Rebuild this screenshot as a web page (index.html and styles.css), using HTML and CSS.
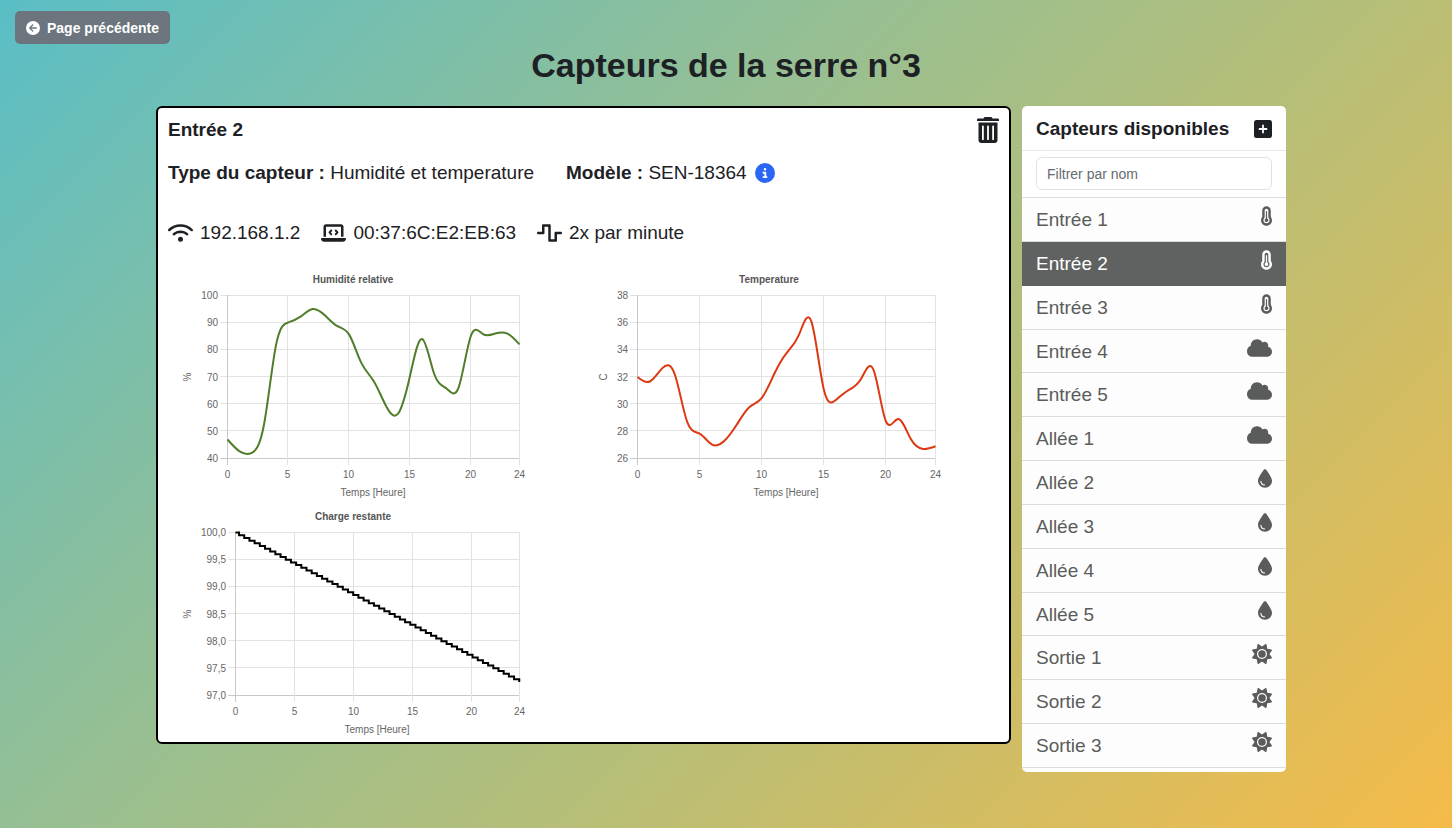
FILE: index.html
```html
<!DOCTYPE html>
<html lang="fr">
<head>
<meta charset="utf-8">
<title>Capteurs de la serre n°3</title>
<link rel="stylesheet" href="styles.css">
</head>
<body>
<svg class="sprite" aria-hidden="true">
  <symbol id="i-back" viewBox="0 0 512 512"><path fill-rule="evenodd" d="M512 256A256 256 0 1 0 0 256a256 256 0 1 0 512 0zM231 127c9.400-9.400 24.600-9.400 33.900 0s9.400 24.600 0 33.900l-71 71L376 232c13.300 0 24 10.700 24 24s-10.700 24-24 24l-182.100 0 71 71c9.400 9.400 9.400 24.600 0 33.900s-24.600 9.400-33.900 0L119 273c-9.400-9.400-9.400-24.600 0-33.900L231 127z"/></symbol>
  <symbol id="i-info" viewBox="0 0 512 512"><path fill-rule="evenodd" d="M256 512A256 256 0 1 0 256 0a256 256 0 1 0 0 512zM216 336h24V272H216c-13.300 0-24-10.700-24-24s10.700-24 24-24h48c13.300 0 24 10.700 24 24v88h8c13.300 0 24 10.700 24 24s-10.700 24-24 24H216c-13.300 0-24-10.700-24-24s10.700-24 24-24zm40-208a32 32 0 1 1 0 64 32 32 0 1 1 0-64z"/></symbol>
  <symbol id="i-wifi" viewBox="0 0 640 512"><path d="M54.200 202.900C123.200 136.700 216.800 96 320 96s196.800 40.700 265.800 106.900c12.800 12.200 33 11.800 45.200-.9s11.800-33-.9-45.200C549.700 79.500 440.400 32 320 32S90.300 79.500 9.800 156.700C-2.900 169-3.300 189.200 8.900 202s32.500 13.200 45.200 .9zM320 256c56.800 0 108.600 21.100 148.200 56c13.300 11.700 33.500 10.400 45.200-2.800s10.400-33.500-2.800-45.200C459.800 219.200 393 192 320 192s-139.800 27.200-190.500 72c-13.300 11.700-14.500 31.900-2.800 45.200s31.900 14.500 45.200 2.800c39.500-34.900 91.300-56 148.200-56zm64 160a64 64 0 1 0 -128 0 64 64 0 1 0 128 0z"/></symbol>
  <symbol id="i-laptop" viewBox="0 0 640 512"><path d="M64 96c0-35.300 28.700-64 64-64H512c35.300 0 64 28.700 64 64V352H512V96H128V352H64V96zM0 403.200C0 392.600 8.600 384 19.200 384H620.800c10.600 0 19.200 8.600 19.200 19.200c0 42.400-34.400 76.800-76.800 76.800H76.800C34.400 480 0 445.600 0 403.200zM281 209l-31 31 31 31c9.400 9.400 9.400 24.600 0 33.900s-24.600 9.400-33.900 0l-48-48c-9.400-9.400-9.400-24.600 0-33.900l48-48c9.400-9.400 24.600-9.400 33.900 0s9.400 24.600 0 33.900zM393 175l48 48c9.400 9.400 9.400 24.600 0 33.900l-48 48c-9.400 9.400-24.600 9.400-33.900 0s-9.400-24.600 0-33.900l31-31-31-31c-9.400-9.400-9.400-24.600 0-33.900s24.600-9.400 33.900 0z"/></symbol>
  <symbol id="i-wave" viewBox="0 0 640 512"><path d="M128 64c0-17.700 14.300-32 32-32H320c17.700 0 32 14.300 32 32V416h96V256c0-17.700 14.300-32 32-32H608c17.700 0 32 14.300 32 32s-14.300 32-32 32H512V448c0 17.700-14.300 32-32 32H320c-17.700 0-32-14.300-32-32V96H192V256c0 17.700-14.300 32-32 32H32c-17.700 0-32-14.300-32-32s14.300-32 32-32h96V64z"/></symbol>
  <symbol id="i-trash" viewBox="0 0 22 26"><path fill-rule="evenodd" d="M7.500 0h7l1 1.500H21a1 1 0 0 1 1 1V4H0V2.500a1 1 0 0 1 1-1h5.500zM1.500 5.500h19V23a3 3 0 0 1-3 3h-13a3 3 0 0 1-3-3zM5 9.300v12.900a.9.900 0 0 0 1.800 0V9.300a.9.900 0 0 0-1.800 0zM10.100 9.300v12.900a.9.900 0 0 0 1.800 0V9.300a.9.900 0 0 0-1.800 0zM15.200 9.300v12.900a.9.900 0 0 0 1.800 0V9.300a.9.900 0 0 0-1.800 0z"/></symbol>
  <symbol id="i-plus" viewBox="0 0 18 18"><rect width="18" height="18" rx="2.500"/><path d="M9 5.500v7M5.500 9h7" stroke="#fff" stroke-width="1.800" stroke-linecap="round"/></symbol>
  <symbol id="i-temp" viewBox="16 0 288 512"><path fill-rule="evenodd" d="M160 64c-26.500 0-48 21.500-48 48V276.500c0 17.300-7.100 31.900-15.300 42.500C86.200 332.600 80 349.500 80 368c0 44.200 35.800 80 80 80s80-35.800 80-80c0-18.500-6.200-35.400-16.700-48.900c-8.200-10.600-15.300-25.200-15.300-42.500V112c0-26.500-21.500-48-48-48zM48 112C48 50.200 98.100 0 160 0s112 50.100 112 112V276.500c0 .1 .1 .3 .2 .6c.2 .6 .8 1.600 1.700 2.800c18.900 24.400 30.100 55 30.100 88.100c0 79.500-64.500 144-144 144S16 447.500 16 368c0-33.200 11.200-63.800 30.100-88.100c.9-1.200 1.500-2.200 1.700-2.800c.1-.3 .2-.5 .2-.6V112zM208 368c0 26.500-21.500 48-48 48s-48-21.500-48-48c0-20.900 13.400-38.700 32-45.300V144c0-8.800 7.200-16 16-16s16 7.200 16 16V322.700c18.600 6.600 32 24.400 32 45.300z"/></symbol>
  <symbol id="i-cloud" viewBox="0 0 640 512"><path d="M537.600 226.600c4.100-10.700 6.400-22.400 6.400-34.600 0-53-43-96-96-96-19.700 0-38.100 6-53.300 16.200C367 64.200 315.300 32 256 32c-88.400 0-160 71.600-160 160 0 2.700.1 5.400.2 8.100C40.200 219.800 0 273.200 0 336c0 79.500 64.500 144 144 144h368c70.700 0 128-57.300 128-128 0-61.900-44-113.600-102.400-125.400z"/></symbol>
  <symbol id="i-drop" viewBox="0 0 384 512"><path fill-rule="evenodd" d="M192 512C86 512 0 426 0 320C0 228.800 130.200 57.700 166.600 11.700C172.600 4.200 181.500 0 191.100 0h1.800c9.600 0 18.500 4.200 24.500 11.700C253.800 57.700 384 228.800 384 320c0 106-86 192-192 192zM96 336c0-8.800-7.200-16-16-16s-16 7.200-16 16c0 61.900 50.100 112 112 112c8.800 0 16-7.200 16-16s-7.200-16-16-16c-44.200 0-80-35.800-80-80z"/></symbol>
  <symbol id="i-sun" viewBox="0 0 512 512"><path fill-rule="evenodd" d="M361.500 1.200c5 2.100 8.600 6.600 9.600 11.900L391 121l107.900 19.800c5.300 1 9.800 4.600 11.900 9.600s1.500 10.700-1.600 15.200L446.900 256l62.300 90.300c3.100 4.500 3.700 10.200 1.600 15.200s-6.600 8.600-11.900 9.600L391 391 371.100 498.900c-1 5.300-4.600 9.800-9.600 11.900s-10.700 1.500-15.200-1.600L256 446.900l-90.300 62.300c-4.500 3.100-10.200 3.700-15.200 1.600s-8.600-6.600-9.600-11.900L121 391 13.100 371.100c-5.300-1-9.800-4.600-11.900-9.600s-1.500-10.700 1.600-15.200L65.100 256 2.800 165.700c-3.100-4.500-3.700-10.200-1.600-15.200s6.600-8.600 11.900-9.600L121 121 140.900 13.100c1-5.300 4.600-9.800 9.600-11.900s10.700-1.500 15.200 1.600L256 65.100 346.300 2.800c4.500-3.100 10.200-3.700 15.200-1.600zM160 256a96 96 0 1 1 192 0 96 96 0 1 1 -192 0zm224 0a128 128 0 1 0 -256 0 128 128 0 1 0 256 0z"/></symbol>
</svg>

<header class="page-head">
  <button class="back" type="button"><svg class="back-icon"><use href="#i-back"/></svg>Page précédente</button>
  <h1 class="page-title">Capteurs de la serre n°3</h1>
</header>

<main class="layout">
  <section class="card">
    <div class="card-head">
      <h2 class="card-title">Entrée 2</h2>
      <button class="icon-button" type="button" aria-label="Supprimer"><svg class="trash-icon"><use href="#i-trash"/></svg></button>
    </div>
    <div class="facts">
      <p class="fact-text"><strong>Type du capteur :</strong> Humidité et temperature</p>
      <p class="fact-text"><strong>Modèle :</strong> SEN-18364</p>
      <button class="icon-button info" type="button" aria-label="Informations"><svg class="info-icon"><use href="#i-info"/></svg></button>
    </div>
    <div class="network">
      <span class="net-item"><svg class="wide-icon"><use href="#i-wifi"/></svg>192.168.1.2</span>
      <span class="net-item"><svg class="wide-icon"><use href="#i-laptop"/></svg>00:37:6C:E2:EB:63</span>
      <span class="net-item"><svg class="wide-icon"><use href="#i-wave"/></svg>2x par minute</span>
    </div>
    <div class="charts">
      <svg class="chart" id="humidity" viewBox="0 0 350 235" role="img" aria-label="Humidité relative"></svg>
      <svg class="chart" id="temperature" viewBox="0 0 350 235" role="img" aria-label="Temperature"></svg>
      <svg class="chart" id="battery" viewBox="0 0 350 235" role="img" aria-label="Charge restante"></svg>
    </div>
  </section>

  <aside class="sidebar">
    <div class="side-head">
      <h2 class="card-title">Capteurs disponibles</h2>
      <button class="icon-button" type="button" aria-label="Ajouter"><svg class="plus-icon"><use href="#i-plus"/></svg></button>
    </div>
    <div class="filter"><input class="filter-input" type="text" placeholder="Filtrer par nom" aria-label="Filtrer par nom"></div>
    <nav class="sensors">
      <a class="sensor" href="#">Entrée 1<svg class="temp-icon"><use href="#i-temp"/></svg></a>
      <a class="sensor sensor-active" href="#">Entrée 2<svg class="temp-icon"><use href="#i-temp"/></svg></a>
      <a class="sensor" href="#">Entrée 3<svg class="temp-icon"><use href="#i-temp"/></svg></a>
      <a class="sensor" href="#">Entrée 4<svg class="wide-icon"><use href="#i-cloud"/></svg></a>
      <a class="sensor" href="#">Entrée 5<svg class="wide-icon"><use href="#i-cloud"/></svg></a>
      <a class="sensor" href="#">Allée 1<svg class="wide-icon"><use href="#i-cloud"/></svg></a>
      <a class="sensor" href="#">Allée 2<svg class="drop-icon"><use href="#i-drop"/></svg></a>
      <a class="sensor" href="#">Allée 3<svg class="drop-icon"><use href="#i-drop"/></svg></a>
      <a class="sensor" href="#">Allée 4<svg class="drop-icon"><use href="#i-drop"/></svg></a>
      <a class="sensor" href="#">Allée 5<svg class="drop-icon"><use href="#i-drop"/></svg></a>
      <a class="sensor" href="#">Sortie 1<svg class="sun-icon"><use href="#i-sun"/></svg></a>
      <a class="sensor" href="#">Sortie 2<svg class="sun-icon"><use href="#i-sun"/></svg></a>
      <a class="sensor" href="#">Sortie 3<svg class="sun-icon"><use href="#i-sun"/></svg></a>
    </nav>
  </aside>
</main>
<script src="charts.js"></script>
</body>
</html>
```
FILE: styles.css
```css
* { box-sizing: border-box; }

body {
  margin: 0;
  min-height: 100vh;
  font-family: "Liberation Sans", Arial, sans-serif;
  font-size: 19px;
  line-height: 28px;
  color: #1d2125;
  background: linear-gradient(135deg, #5abec6 0%, #9abf90 40%, #b8be76 62%, #f5bb49 100%);
}

h1, h2, p { margin: 0; }
svg { display: block; flex: none; fill: currentColor; }
.sprite { display: none; }

.page-head { padding: 11px 15px 0; }

.back {
  display: flex;
  align-items: center;
  gap: 7px;
  height: 33px;
  padding: 0 11px;
  border: 0;
  border-radius: 5px;
  background: #6c757d;
  color: #fff;
  font: bold 14px "Liberation Sans", Arial, sans-serif;
}
.back-icon { width: 14px; height: 14px; }

.page-title {
  font-size: 34px;
  line-height: 42px;
  text-align: center;
}

.layout {
  display: grid;
  grid-template-columns: 855fr 264fr;
  align-items: start;
  gap: 11px;
  max-width: 1140px;
  margin: 0 auto;
  padding: 20px 10px 16px 0;
}

.card {
  padding: 8px 10px 0;
  border: 2px solid #000;
  border-radius: 6px;
  background: #fff;
}
.card-head { display: flex; justify-content: space-between; align-items: center; }
.card-title { font-size: 19px; line-height: 28px; }

.icon-button { padding: 0; border: 0; background: none; color: #1d2125; }
.trash-icon { width: 22px; height: 26px; }
.info { color: #2b67f6; }
.info-icon { width: 20px; height: 20px; }
.plus-icon { width: 18px; height: 18px; }

.facts { display: flex; align-items: center; padding-top: 15px; }
.fact-text + .fact-text { margin: 0 8px 0 32px; }

.network { display: flex; gap: 21px; padding-top: 32px; }
.net-item { display: flex; align-items: center; gap: 7px; }
.wide-icon { width: 25px; height: 20px; }

.charts {
  display: grid;
  grid-template-columns: 1fr 1fr;
  gap: 2px 10px;
  padding: 23px 0 0 10px;
}
.chart { width: 100%; max-width: 350px; height: auto; font-size: 10px; fill: #666; }
.chart-title { font-weight: bold; fill: #555; text-anchor: middle; }
.label-x { text-anchor: middle; }
.label-y { text-anchor: end; }
.grid-line { stroke: #e2e2e2; }
.axis-line { stroke: #c8c8c8; }
.curve { fill: none; stroke-width: 2; }
.curve-humidity { stroke: #4f7d2a; }
.curve-temperature { stroke: #dc3912; }
.curve-battery { stroke: #000; }

.sidebar {
  padding-bottom: 4px;
  border-radius: 5px;
  background: #fff;
  overflow: hidden;
}
.side-head {
  display: flex;
  justify-content: space-between;
  align-items: center;
  padding: 9px 14px 7px;
  border-bottom: 1px solid #e6e8ea;
}
.filter { padding: 6px 14px 7px; }
.filter-input {
  display: block;
  width: 100%;
  height: 33px;
  padding: 0 10px;
  border: 1px solid #dee2e6;
  border-radius: 6px;
  font: 14px "Liberation Sans", Arial, sans-serif;
  color: #212529;
}
.filter-input::placeholder { color: #656b71; opacity: 1; }

.sensors {
  display: grid;
  grid-auto-rows: 1fr;
  min-height: 571px;
  border-top: 1px solid #dcdcdc;
}
.sensor {
  display: flex;
  justify-content: space-between;
  align-items: flex-start;
  padding: 8px 14px 6px;
  border-bottom: 1px solid #dcdcdc;
  background: #fdfdfd;
  color: #5a5c5b;
  text-decoration: none;
}
.sensor-active { background: #606261; border-color: #606261; color: #fff; }
.temp-icon { width: 11px; height: 20px; }
.drop-icon { width: 14px; height: 19px; }
.sun-icon { width: 20px; height: 20px; }
```
FILE: charts.js
```js
const TOP = 25, BOTTOM = 188, RIGHT = 341;

function add(svg, name, attrs, text) {
  const el = document.createElementNS("http://www.w3.org/2000/svg", name);
  for (const key in attrs) el.setAttribute(key, attrs[key]);
  if (text !== undefined) el.textContent = text;
  svg.appendChild(el);
}

// Natural cubic spline through evenly spaced points, as Bezier segments.
function spline(points) {
  const n = points.length - 1;
  const c = [0.5], d = [1.5 * (points[1][1] - points[0][1])];
  for (let i = 1; i <= n; i++) {
    const last = i === n;
    const b = last ? 2 : 4;
    const r = 3 * (points[last ? n : i + 1][1] - points[i - 1][1]);
    const m = b - c[i - 1];
    c.push(1 / m);
    d.push((r - d[i - 1]) / m);
  }
  const slope = [];
  slope[n] = d[n];
  for (let i = n - 1; i >= 0; i--) slope[i] = d[i] - c[i] * slope[i + 1];

  let path = "M" + points[0];
  for (let i = 0; i < n; i++) {
    const [x0, y0] = points[i], [x1, y1] = points[i + 1];
    const third = (x1 - x0) / 3;
    path += `C${x0 + third},${y0 + slope[i] / 3} ${x1 - third},${y1 - slope[i + 1] / 3} ${x1},${y1}`;
  }
  return path;
}

function drawChart(o) {
  const svg = document.getElementById(o.id);
  const x = h => o.left + h / 24 * (RIGHT - o.left);
  const y = v => BOTTOM - (v - o.min) / (o.max - o.min) * (BOTTOM - TOP);
  const snap = n => Math.floor(n) + 0.5;

  add(svg, "text", { x: 175, y: 13, class: "chart-title" }, o.title);
  for (let v = o.max; v >= o.min; v -= o.step) {
    const line = snap(y(v));
    add(svg, "path", { d: `M${o.left - 7} ${line}H${RIGHT + 1}`, class: v === o.min ? "axis-line" : "grid-line" });
    add(svg, "text", { x: o.left - 9, y: Math.round(y(v)) + 4, class: "label-y" }, v.toFixed(o.digits).replace(".", ","));
  }
  for (const h of [0, 5, 10, 15, 20, 24]) {
    const line = snap(x(h));
    add(svg, "path", { d: `M${line} ${TOP}V${BOTTOM + 7}`, class: h === 0 ? "axis-line" : "grid-line" });
    add(svg, "text", { x: line, y: 208, class: "label-x" }, h);
  }
  add(svg, "text", { x: (o.left + RIGHT) / 2, y: 226, class: "label-x" }, "Temps [Heure]");
  add(svg, "text", { transform: "translate(13 107) rotate(-90)", class: "label-x" }, o.unit);

  const points = o.data.map(([h, v]) => [x(h) + 0.5, y(v) + 0.5]);
  add(svg, "path", { d: o.stepped ? "M" + points.join("L") : spline(points), class: "curve curve-" + o.id });
}

const hourly = values => values.map((v, h) => [h, v]);

drawChart({
  id: "humidity", title: "Humidité relative", unit: "%", left: 49, min: 40, max: 100, step: 10, digits: 0,
  data: hourly([47, 42.6, 42.1, 52.5, 82, 90.1, 92.2, 95, 92.7, 88.8, 85.6, 75.2, 68.6, 59.6, 56.4, 70.4, 84, 71, 65.8, 66.2, 85.1, 85.8, 86, 86, 82])
});
drawChart({
  id: "temperature", title: "Temperature", unit: "C", left: 43, min: 26, max: 38, step: 2, digits: 0,
  data: hourly([32, 31.67, 32.65, 32.2, 28.7, 27.83, 27.03, 27.3, 28.5, 29.77, 30.45, 32.2, 33.75, 35.1, 36.1, 31.1, 30.33, 31.03, 31.85, 32.55, 28.75, 28.9, 27.45, 26.7, 26.9])
});

const charge = [[0, 100]];
for (let k = 0; k < 55; k++) {
  const h = 0.3 + k * 0.4385;
  charge.push([h, 100 - k * 0.05], [h, 99.95 - k * 0.05]);
}
drawChart({
  id: "battery", title: "Charge restante", unit: "%", left: 57, min: 97, max: 100, step: 0.5, digits: 1,
  data: charge, stepped: true
});
```
